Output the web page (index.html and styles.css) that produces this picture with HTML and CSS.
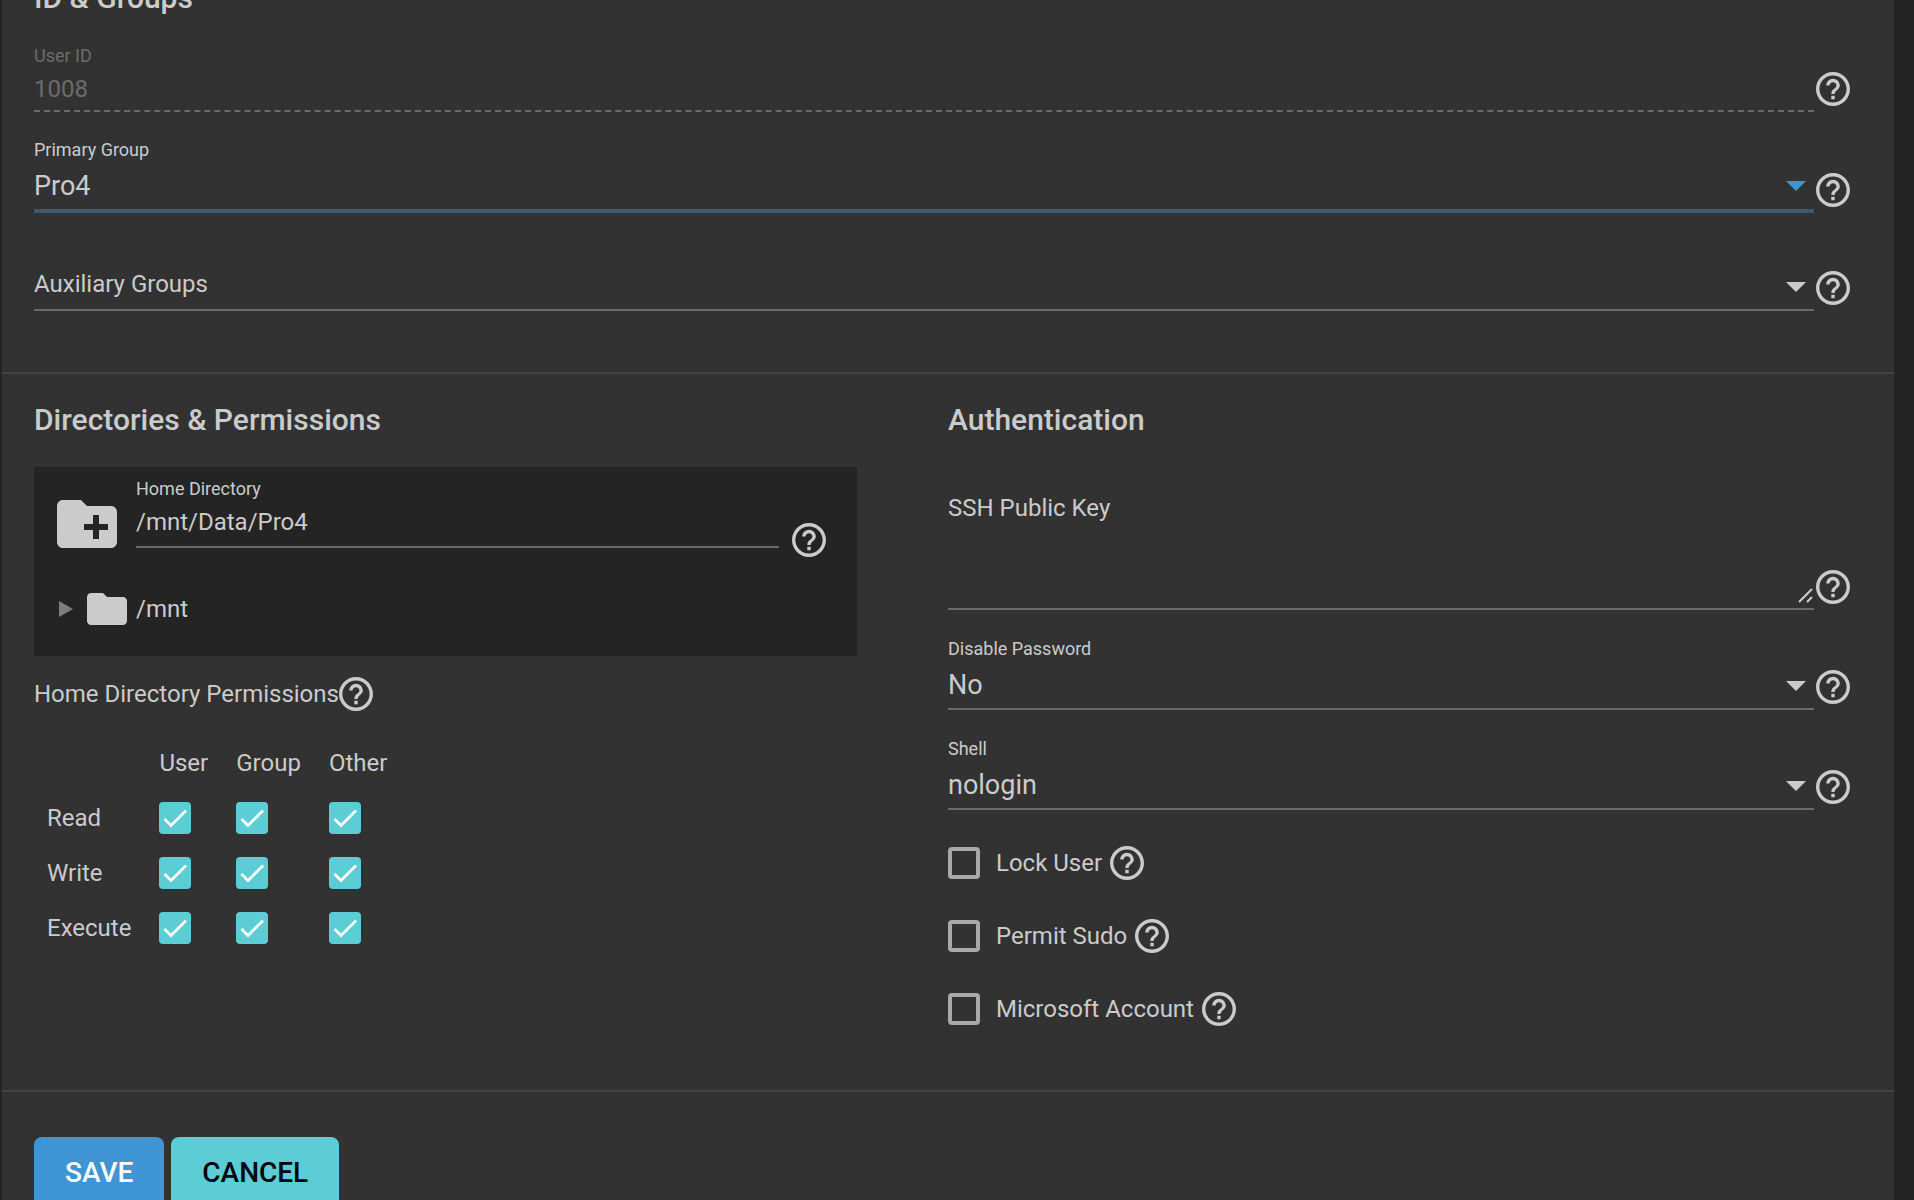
FILE: index.html
```html
<!DOCTYPE html>
<html lang="en">
<head>
<meta charset="utf-8">
<meta name="viewport" content="width=device-width, initial-scale=1">
<title>Edit User</title>
<link rel="stylesheet" href="styles.css">
</head>
<body>
<svg class="sprite" aria-hidden="true">
  <symbol id="help" viewBox="2 2 20 20"><path d="M11 18h2v-2h-2v2zm1-16C6.48 2 2 6.48 2 12s4.48 10 10 10 10-4.48 10-10S17.52 2 12 2zm0 18c-4.41 0-8-3.59-8-8s3.59-8 8-8 8 3.59 8 8-3.59 8-8 8zm0-14c-2.21 0-4 1.79-4 4h2c0-1.1.9-2 2-2s2 .9 2 2c0 2-3 1.75-3 5h2c0-2.25 3-2.5 3-5 0-2.21-1.79-4-4-4z"/></symbol>
  <symbol id="caret" viewBox="0 0 20 10"><path d="M0 0h20L10 10z"/></symbol>
</svg>
<main class="card">
  <form>
    <section class="section">
      <h2 class="title">ID &amp; Groups</h2>
      <div class="field">
        <div class="field-body">
          <label class="label label-disabled" for="uid">User ID</label>
          <input class="control control-dashed" id="uid" type="text" value="1008" disabled>
        </div>
        <button class="help" type="button" aria-label="Help: User ID"><svg><use href="#help"/></svg></button>
      </div>
      <div class="field">
        <div class="field-body">
          <label class="label" for="group">Primary Group</label>
          <div class="select select-focused">
            <select class="control control-large" id="group"><option>Pro4</option></select>
            <svg class="caret"><use href="#caret"/></svg>
          </div>
        </div>
        <button class="help" type="button" aria-label="Help: Primary Group"><svg><use href="#help"/></svg></button>
      </div>
      <div class="field field-plain">
        <div class="field-body">
          <div class="select">
            <select class="control control-plain" aria-label="Auxiliary Groups"><option>Auxiliary Groups</option></select>
            <svg class="caret"><use href="#caret"/></svg>
          </div>
        </div>
        <button class="help" type="button" aria-label="Help: Auxiliary Groups"><svg><use href="#help"/></svg></button>
      </div>
    </section>

    <div class="section columns">
      <section class="directories">
        <h2 class="title">Directories &amp; Permissions</h2>
        <div class="explorer">
          <div class="explorer-head">
            <svg class="folder-add" viewBox="2 4 20 16"><path d="M20 6h-8l-2-2H4c-1.11 0-1.99.89-1.99 2L2 18c0 1.11.89 2 2 2h16c1.11 0 2-.89 2-2V8c0-1.11-.89-2-2-2zm-1 8h-3v3h-2v-3h-3v-2h3V9h2v3h3v2z"/></svg>
            <div class="field-body">
              <label class="label" for="home">Home Directory</label>
              <input class="control control-home" id="home" type="text" value="/mnt/Data/Pro4">
            </div>
            <button class="help" type="button" aria-label="Help: Home Directory"><svg><use href="#help"/></svg></button>
          </div>
          <div class="tree">
            <svg class="tree-toggle" viewBox="0 0 14 16"><path d="M0 0l14 8-14 8z"/></svg>
            <svg class="folder" viewBox="2 4 20 16" preserveAspectRatio="none"><path d="M10 4H4c-1.1 0-1.99.9-1.99 2L2 18c0 1.1.9 2 2 2h16c1.1 0 2-.9 2-2V8c0-1.1-.9-2-2-2h-8l-2-2z"/></svg>
            <span>/mnt</span>
          </div>
        </div>
        <div class="perm-title">
          <span id="perm">Home Directory Permissions</span>
          <button class="help" type="button" aria-label="Help: Home Directory Permissions"><svg><use href="#help"/></svg></button>
        </div>
        <table class="perms" aria-labelledby="perm">
          <thead>
            <tr><td></td><th scope="col">User</th><th scope="col">Group</th><th scope="col">Other</th></tr>
          </thead>
          <tbody>
            <tr><th scope="row">Read</th><td><input class="check" type="checkbox" aria-label="User read" checked></td><td><input class="check" type="checkbox" aria-label="Group read" checked></td><td><input class="check" type="checkbox" aria-label="Other read" checked></td></tr>
            <tr><th scope="row">Write</th><td><input class="check" type="checkbox" aria-label="User write" checked></td><td><input class="check" type="checkbox" aria-label="Group write" checked></td><td><input class="check" type="checkbox" aria-label="Other write" checked></td></tr>
            <tr><th scope="row">Execute</th><td><input class="check" type="checkbox" aria-label="User execute" checked></td><td><input class="check" type="checkbox" aria-label="Group execute" checked></td><td><input class="check" type="checkbox" aria-label="Other execute" checked></td></tr>
          </tbody>
        </table>
      </section>

      <section class="auth">
        <h2 class="title">Authentication</h2>
        <div class="field field-key">
          <div class="field-body">
            <label class="key-label" for="ssh">SSH Public Key</label>
            <div class="select">
              <textarea class="control key" id="ssh"></textarea>
              <svg class="grip" viewBox="0 0 16 16"><path class="grip-shade" d="M1 15L15 1M9 15l6-6"/><path class="grip-line" d="M2 15L15 2M10 15l5-5"/></svg>
            </div>
          </div>
          <button class="help" type="button" aria-label="Help: SSH Public Key"><svg><use href="#help"/></svg></button>
        </div>
        <div class="field">
          <div class="field-body">
            <label class="label" for="disable">Disable Password</label>
            <div class="select">
              <select class="control control-large" id="disable"><option>No</option></select>
              <svg class="caret"><use href="#caret"/></svg>
            </div>
          </div>
          <button class="help" type="button" aria-label="Help: Disable Password"><svg><use href="#help"/></svg></button>
        </div>
        <div class="field">
          <div class="field-body">
            <label class="label" for="shell">Shell</label>
            <div class="select">
              <select class="control control-large" id="shell"><option>nologin</option></select>
              <svg class="caret"><use href="#caret"/></svg>
            </div>
          </div>
          <button class="help" type="button" aria-label="Help: Shell"><svg><use href="#help"/></svg></button>
        </div>
        <div class="options">
          <div class="option">
            <input class="check" type="checkbox" id="lock"><label for="lock">Lock User</label>
            <button class="help" type="button" aria-label="Help: Lock User"><svg><use href="#help"/></svg></button>
          </div>
          <div class="option">
            <input class="check" type="checkbox" id="sudo"><label for="sudo">Permit Sudo</label>
            <button class="help" type="button" aria-label="Help: Permit Sudo"><svg><use href="#help"/></svg></button>
          </div>
          <div class="option">
            <input class="check" type="checkbox" id="msa"><label for="msa">Microsoft Account</label>
            <button class="help" type="button" aria-label="Help: Microsoft Account"><svg><use href="#help"/></svg></button>
          </div>
        </div>
      </section>
    </div>

    <div class="actions">
      <button class="btn btn-save" type="submit">SAVE</button>
      <button class="btn btn-cancel" type="button">CANCEL</button>
    </div>
  </form>
</main>
</body>
</html>
```
FILE: styles.css
```css
* { box-sizing: border-box; }

:root {
  --page: #242424;
  --card: #323232;
  --text: #cbcbcb;
  --line: #6a6a6a;
  --divider: #424242;
  --blue: #3f95d3;
  --teal: #5dcdd5;
}

body {
  margin: 0;
  height: 100vh;
  overflow: hidden;
  background: var(--page);
  color: var(--text);
  font: 24px/32px Roboto, sans-serif;
}

.sprite { position: absolute; width: 0; height: 0; }
svg { display: block; fill: currentColor; }

/* The view is scrolled a little past the top of the form. */
.card {
  margin: -22px 20px 0 2px;
  background: var(--card);
}

.section {
  padding: 0 44px 61px 32px;
  border-bottom: 2px solid var(--divider);
}

.title {
  margin: 0;
  font-size: 30px;
  line-height: 40px;
  font-weight: 500;
}

.field {
  display: flex;
  align-items: flex-end;
  gap: 2px;
  margin-top: 26px;
}
.field-plain { margin-top: 48px; }
.field-body { flex: 1; min-width: 0; }

.label {
  display: block;
  font-size: 18px;
  line-height: 24px;
}
.label-disabled { color: #6c6c6c; }

.control {
  display: block;
  width: 100%;
  margin: 0;
  padding: 6px 0;
  height: 46px;
  border: 0;
  border-bottom: 2px solid var(--line);
  border-radius: 0;
  background: transparent;
  color: inherit;
  font: inherit;
  appearance: none;
  outline: 0;
}
.control-dashed {
  height: 44px;
  padding: 5px 0;
  border-bottom-style: dashed;
  color: #6c6c6c;
}
.control-plain {
  height: 50px;
  padding: 7px 0 9px;
}
.control-home {
  height: 47px;
  padding: 4px 0 8px;
}
.control-large {
  height: 49px;
  font-size: 27px;
  line-height: 36px;
}

.select { position: relative; }
.caret {
  position: absolute;
  right: 8px;
  bottom: 19px;
  width: 20px;
  height: 10px;
  pointer-events: none;
}
.select-focused .control {
  height: 51px;
  border-bottom: 4px solid #3b5a73;
}
.select-focused .caret { bottom: 22px; color: var(--blue); }

.help {
  flex: none;
  width: 34px;
  height: 34px;
  margin: 0 0 6px;
  padding: 0;
  border: 0;
  background: none;
  color: var(--text);
}
.help svg { width: 34px; height: 34px; }

.columns {
  display: grid;
  grid-template-columns: 1fr 1fr;
  gap: 12px;
  padding-top: 26px;
  padding-bottom: 64px;
}
.directories { padding-right: 79px; }

.explorer {
  margin-top: 27px;
  padding: 10px 31px 31px 23px;
  background: var(--page);
}
.explorer-head { display: flex; align-items: flex-end; }
.explorer-head .field-body { margin: 0 13px 0 19px; }
.explorer-head .help { margin-bottom: -9px; }
.folder-add { width: 60px; height: 48px; }
.tree {
  display: flex;
  align-items: center;
  gap: 14px;
  margin-top: 45px;
  padding-left: 2px;
}
.tree-toggle { width: 14px; height: 16px; color: #7d7d7d; }
.folder { width: 40px; height: 32px; }
.tree span { margin-left: -5px; }

.perm-title {
  display: flex;
  align-items: center;
  margin-top: 21px;
}
.perm-title .help, .option .help { margin: 0; }

.perms {
  margin: 24px 0 0 13px;
  border-collapse: collapse;
}
.perms tr { height: 55px; }
.perms th, .perms td {
  padding: 0 28px 0 0;
  font-weight: 400;
  text-align: left;
}

.check {
  display: block;
  flex: none;
  width: 32px;
  height: 32px;
  margin: 0;
  border: 4px solid #a9a9a9;
  border-radius: 4px;
  appearance: none;
}
.check:checked {
  border: 0;
  background: var(--teal) url("data:image/svg+xml,%3Csvg xmlns='http://www.w3.org/2000/svg' viewBox='0 0 24 24'%3E%3Cpath fill='none' stroke='white' stroke-width='2.1' d='M4.1 12.7L9 17.6 20.3 6.3'/%3E%3C/svg%3E") center / 32px;
}

.field-key { margin-top: 52px; }
.auth .field:not(.field-key) { margin-top: 27px; }
.key-label { display: block; }
.key { height: 86px; resize: none; }
.grip {
  position: absolute;
  right: 1px;
  bottom: 7px;
  width: 16px;
  height: 16px;
  fill: none;
}
.grip-shade { stroke: #111; stroke-width: 1; }
.grip-line { stroke: #d0d0d0; stroke-width: 2; }

.options {
  display: grid;
  gap: 39px;
  margin-top: 36px;
}
.option { display: flex; align-items: center; }
.option label { margin: 0 8px 0 16px; }

.actions {
  display: flex;
  gap: 7px;
  padding: 45px 44px 32px 32px;
}
.btn {
  height: 72px;
  padding: 0 31px;
  border: 0;
  border-radius: 8px;
  font: 500 28px/36px Roboto, sans-serif;
}
.btn-save { background: var(--blue); color: #fff; }
.btn-cancel { background: var(--teal); color: #000; }
```
